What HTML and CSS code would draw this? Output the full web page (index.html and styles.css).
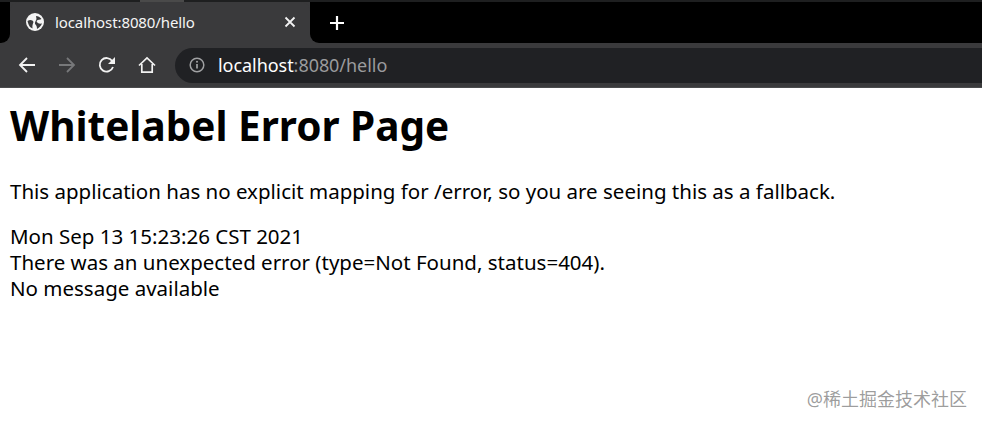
FILE: index.html
```html
<!DOCTYPE html>
<html lang="en">
<head>
<meta charset="utf-8">
<title>Error</title>
<link rel="stylesheet" href="styles.css">
</head>
<body>
<header class="chrome">
  <div class="titlebar"><div class="titlebar-mark"></div></div>
  <div class="tabstrip">
    <div class="strip-left"></div>
    <div class="tab">
      <svg class="globe" viewBox="0 0 18 18" width="18" height="18"><circle cx="9" cy="9" r="9" fill="#f5f5f5"/><path d="M1.500 8C4 6 7 7 7.500 9 7 11 6 12 6.500 15.500L4 14C2.500 12 2 10 1.500 8zM10 3c2 0 4 1 5.500 3-1.500 1-3.500 0-5 2 .5 2 2.500 3 5.500 2.500-1 2.500-3 4.500-5 5.500 0-3-1-4-2-5-.5-2 1-3 1.500-5z" fill="#3a3a3c"/></svg>
      <span class="tab-title">localhost:8080/hello</span>
      <svg class="close" viewBox="0 0 12 12" width="12" height="12"><path d="M1.500 1.500l9 9M10.500 1.500l-9 9" stroke="#f2f2f2" stroke-width="1.800" fill="none"/></svg>
    </div>
    <div class="strip-right">
      <svg class="plus" viewBox="0 0 16 16" width="16" height="16"><path d="M8 1v14M1 8h14" stroke="#fff" stroke-width="2.200" fill="none"/></svg>
    </div>
  </div>
  <div class="toolbar">
    <svg class="nav" viewBox="0 0 18 18" width="18" height="18"><path d="M17 9H2M9 2L2 9l7 7" stroke="#f2f2f2" stroke-width="1.800" fill="none"/></svg>
    <svg class="nav" viewBox="0 0 18 18" width="18" height="18"><path d="M1 9h15M9 2l7 7-7 7" stroke="#77787a" stroke-width="1.800" fill="none"/></svg>
    <svg class="nav" viewBox="0 0 18 18" width="18" height="18"><path d="M15 11a6.800 6.800 0 1 1-.8-6" stroke="#f2f2f2" stroke-width="1.800" fill="none"/><path d="M17 1v7h-7z" fill="#f2f2f2"/></svg>
    <svg class="nav" viewBox="0 0 18 18" width="18" height="18"><path d="M1 9.500L9 2l8 7.500M3.800 8v8.200h10.400V8" stroke="#f2f2f2" stroke-width="1.700" fill="none"/></svg>
    <div class="omnibox">
      <svg viewBox="0 0 16 16" width="16" height="16"><circle cx="8" cy="8" r="6.800" stroke="#a0a1a3" stroke-width="1.500" fill="none"/><path d="M8 7v4.500" stroke="#a0a1a3" stroke-width="1.700"/><circle cx="8" cy="4.800" r="1" fill="#a0a1a3"/></svg>
      <span class="url"><span class="host">localhost</span>:8080/hello</span>
    </div>
  </div>
</header>
<main class="page">
  <h1>Whitelabel Error Page</h1>
  <p>This application has no explicit mapping for /error, so you are seeing this as a fallback.</p>
  <div class="details">
    <div>Mon Sep 13 15:23:26 CST 2021</div>
    <div>There was an unexpected error (type=Not Found, status=404).</div>
    <div>No message available</div>
  </div>
  <div class="watermark">@稀土掘金技术社区</div>
</main>
</body>
</html>
```
FILE: styles.css
```css
* { box-sizing: border-box; }
html, body { margin: 0; height: 100%; }
body {
  width: 982px;
  height: 426px;
  overflow: hidden;
  background: #fff;
  color: #000;
  font-family: "Noto Sans", "Noto Sans CJK SC", sans-serif;
  display: flex;
  flex-direction: column;
}
.chrome { flex: none; }
.titlebar {
  height: 2px;
  background: #1e1f20;
  padding-left: 140px;
}
.titlebar-mark {
  width: 44px;
  height: 2px;
  background: #4a4a4a;
}
.tabstrip {
  height: 41px;
  background: #3a3a3c;
  display: flex;
}
.strip-left {
  flex: none;
  width: 10px;
  background: #000;
  border-radius: 0 0 9px 0;
}
.strip-right {
  flex: 1;
  background: #000;
  border-radius: 0 0 0 9px;
  display: flex;
  align-items: center;
  padding-left: 19px;
}
.tab {
  flex: none;
  width: 300px;
  background: #3a3a3c;
  border-radius: 9px 9px 0 0;
  display: flex;
  align-items: center;
  padding: 0 14px 2px 16px;
  color: #f5f5f5;
}
.globe { flex: none; }
.tab-title {
  flex: 1;
  margin-left: 11px;
  font-size: 15px;
  letter-spacing: -0.1px;
}
.close { flex: none; }
.plus { flex: none; }
.toolbar {
  height: 45px;
  background: #3a3a3c;
  border-bottom: 1px solid #4a4b4d;
  display: flex;
  align-items: center;
  padding-left: 18px;
  gap: 22px;
}
.nav { flex: none; }
.omnibox {
  flex: 1;
  height: 35px;
  margin-left: -3px;
  background: #202124;
  border-radius: 18px 0 0 18px;
  display: flex;
  align-items: center;
  padding-left: 14px;
  gap: 13px;
}
.url { font-size: 18px; color: #9a9b9d; letter-spacing: -0.05px; }
.host { color: #fff; }
.page {
  flex: 1;
  position: relative;
  padding: 0 10px;
}
h1 {
  margin: 10px 0 0;
  font-size: 40.500px;
  line-height: 56px;
  font-weight: 700;
}
p {
  margin: 23px 0 0;
  font-size: 20.500px;
  line-height: 28px;
}
.details {
  margin-top: 18px;
  font-size: 20.500px;
  line-height: 26px;
}
.watermark {
  position: absolute;
  right: 15px;
  bottom: 15px;
  font-size: 18px;
  line-height: 24px;
  color: rgba(90, 90, 90, 0.6);
}
```
